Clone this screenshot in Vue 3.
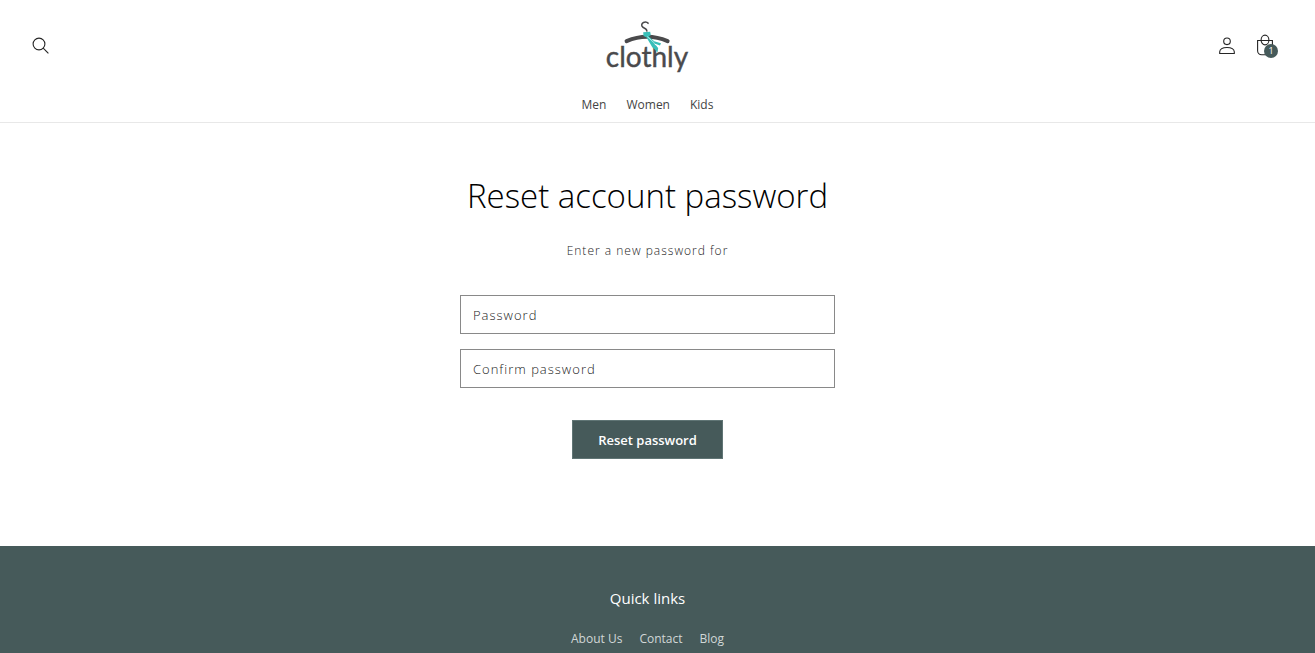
<script setup>
import { ref } from 'vue'

const menu = ['Men', 'Women', 'Kids']
const quickLinks = ['About Us', 'Contact', 'Blog']
const cartCount = ref(1)
const password = ref('')
const confirmation = ref('')
</script>

<template>
  <div class="page">
    <header class="header">
      <div class="header-bar">
        <button class="icon-button" type="button" aria-label="Search">
          <svg width="18" height="18" viewBox="0 0 18 18" fill="none" stroke="#252525" stroke-width="1.1">
            <circle cx="7" cy="7" r="5.9" />
            <path d="M11.2 11.2 16.4 16.4" />
          </svg>
        </button>
        <a class="logo" href="#" aria-label="clothly home">
          <svg width="90" height="60" viewBox="0 0 90 60">
            <path d="M39.2 10.8C37.4 6.8 42.4 4.4 45.6 7.6M39.2 10.4C40.4 13 44.3 11.8 43.8 15.7" fill="none" stroke="#4a4a4c" stroke-width="1.5" />
            <path d="M23.6 25.2Q44 16.5 64.6 25.2" fill="none" stroke="#4a4a4c" stroke-width="4" stroke-linecap="round" />
            <text class="wordmark" x="44" y="51" text-anchor="middle">clothly</text>
            <path d="M40.2 16.2 47.2 15.8 47.8 19.3 45.7 20.3 51.2 25.2 58 27.2 57 29.4 50.7 27.2 55.2 32 54.5 36.2 49.3 31.2 43.4 21.2 40.5 20Z" fill="#39bfb8" />
            <path d="M44.3 20.6 51.4 27" fill="none" stroke="#e2f7f5" stroke-width=".7" />
          </svg>
        </a>
        <div class="header-actions">
          <a class="icon-button" href="#" aria-label="Account">
            <svg width="18" height="18" viewBox="0 0 18 18" fill="none" stroke="#252525" stroke-width="1.1">
              <circle cx="9" cy="4.3" r="3.3" />
              <path d="M1.7 16.5V14.7C2 11.7 4.8 10.5 9 10.5S16 11.7 16.3 14.7V16.5Z" />
            </svg>
          </a>
          <a class="icon-button cart" href="#" aria-label="Cart">
            <svg width="18" height="22" viewBox="0 0 18 22" fill="none" stroke="#252525" stroke-width="1.1">
              <path d="M1.6 6.5H16.4V16.8A4 4 0 0 1 12.4 20.8H5.6A4 4 0 0 1 1.6 16.8Z" />
              <ellipse cx="9" cy="6" rx="3.9" ry="4.9" />
            </svg>
            <span class="badge">{{ cartCount }}</span>
          </a>
        </div>
      </div>
      <nav class="menu" aria-label="Main">
        <a v-for="item in menu" :key="item" href="#">{{ item }}</a>
      </nav>
    </header>

    <main class="main">
      <h1>Reset account password</h1>
      <p>Enter a new password for</p>
      <form class="form" @submit.prevent>
        <input v-model="password" type="password" placeholder="Password" aria-label="Password" autocomplete="new-password" />
        <input v-model="confirmation" type="password" placeholder="Confirm password" aria-label="Confirm password" autocomplete="new-password" />
        <button class="submit" type="submit">Reset password</button>
      </form>
    </main>

    <footer class="footer">
      <h2>Quick links</h2>
      <nav class="quick-links" aria-label="Quick links">
        <a v-for="item in quickLinks" :key="item" href="#">{{ item }}</a>
      </nav>
    </footer>
  </div>
</template>

<style>
body {
  margin: 0;
  background: #fff;
}
</style>

<style scoped>
.page {
  display: flex;
  flex-direction: column;
  min-height: 100vh;
  font-family: "Open Sans", "Noto Sans", sans-serif;
  font-size: 13px;
  line-height: 20px;
  color: #444;
}
a {
  color: inherit;
  text-decoration: none;
}
.header,
.main,
.footer {
  box-sizing: border-box;
  padding-right: 20px;
}
.header {
  border-bottom: 1px solid #e8e8e8;
}
.header-bar {
  display: grid;
  grid-template-columns: 1fr auto 1fr;
  align-items: center;
  height: 92px;
  padding: 0 14px 0 19px;
}
.logo {
  display: flex;
  margin-left: -4px;
}
.wordmark {
  font-family: Lato, sans-serif;
  font-size: 28px;
  fill: #4a4a4c;
  stroke: #4a4a4c;
  stroke-width: 0.4px;
}
.icon-button {
  display: flex;
  align-items: center;
  justify-content: center;
  width: 44px;
  height: 46px;
  padding: 0;
  border: 0;
  background: none;
}
.header-actions {
  display: flex;
  align-items: center;
  justify-self: end;
}
.cart {
  position: relative;
  width: 32px;
  height: 44px;
  padding-bottom: 2px;
  box-sizing: border-box;
}
.badge {
  position: absolute;
  left: 15px;
  top: 20px;
  width: 14px;
  height: 14px;
  border-radius: 50%;
  background: #465a5a;
  color: #fff;
  font-size: 9px;
  line-height: 14px;
  text-align: center;
}
.menu {
  display: flex;
  justify-content: center;
  gap: 20px;
  height: 30px;
  font-size: 12px;
  line-height: 26px;
}
.main {
  display: flex;
  flex-direction: column;
  align-items: center;
  padding-top: 48px;
  padding-bottom: 87px;
}
h1 {
  margin: 0;
  font-size: 33px;
  line-height: 50px;
  font-weight: 300;
  color: #000;
}
p {
  margin: 20px 0 34px;
  font-size: 12px;
  letter-spacing: 1px;
  font-weight: 300;
  color: #222;
}
.form {
  display: flex;
  flex-direction: column;
  align-items: center;
  gap: 15px;
  width: 375px;
  max-width: 90%;
}
input {
  box-sizing: border-box;
  width: 100%;
  height: 39px;
  padding: 0 12px;
  border: 1px solid #898989;
  border-radius: 0;
  background: #fff;
  font: inherit;
  font-weight: 300;
  letter-spacing: 1px;
  color: #121212;
}
input::placeholder {
  color: #222;
  opacity: 1;
}
.submit {
  margin-top: 17px;
  height: 39px;
  padding: 0 25px;
  border: 1px solid #607575;
  background: #465a5a;
  color: #fff;
  font: inherit;
  font-weight: 600;
}
.footer {
  flex: 1;
  display: flex;
  flex-direction: column;
  align-items: center;
  padding-top: 40px;
  background: #465a5a;
  color: #fff;
}
h2 {
  margin: 0;
  font-size: 15px;
  line-height: 24px;
  font-weight: 500;
}
.quick-links {
  display: flex;
  gap: 17px;
  margin-top: 19px;
  font-size: 12px;
  color: #d1d7d7;
}
</style>
